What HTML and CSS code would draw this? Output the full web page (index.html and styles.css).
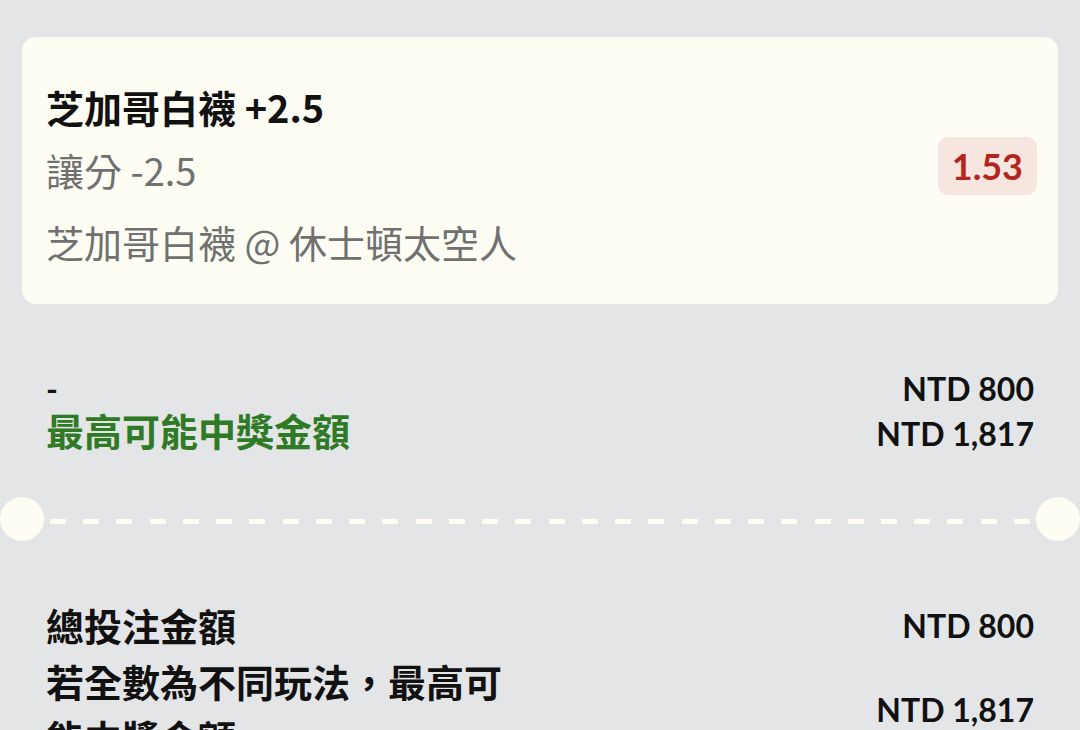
FILE: index.html
```html
<!DOCTYPE html>
<html lang="zh-Hant">
<head>
  <meta charset="UTF-8">
  <meta name="viewport" content="width=device-width, initial-scale=1.0">
  <title>投注單</title>
  <link rel="stylesheet" href="styles.css">
</head>
<body>
  <div class="slip">
    <div class="card">
      <div class="pick">
        <div class="pick-title">芝加哥白襪 +2.5</div>
        <div class="pick-market">讓分 -2.5</div>
        <div class="pick-match">芝加哥白襪 @ 休士頓太空人</div>
      </div>
      <div class="odds">1.53</div>
    </div>

    <div class="summary">
      <div class="row">
        <span class="dash">-</span>
        <span class="amount">NTD 800</span>
      </div>
      <div class="row">
        <span class="label win">最高可能中獎金額</span>
        <span class="amount">NTD 1,817</span>
      </div>
    </div>

    <div class="divider">
      <span class="notch"></span>
      <span class="dashes"></span>
      <span class="notch"></span>
    </div>

    <div class="totals">
      <div class="total-row">
        <span class="label">總投注金額</span>
        <span class="amount">NTD 800</span>
      </div>
      <div class="total-row">
        <span class="label wrap">若全數為不同玩法，最高可能中獎金額</span>
        <span class="amount">NTD 1,817</span>
      </div>
    </div>
  </div>
</body>
</html>
```

FILE: styles.css
```css
* {
  margin: 0;
  padding: 0;
  box-sizing: border-box;
}

body {
  background: #e4e5e7;
  color: #111111;
  font-family: Lato, "Noto Sans CJK TC", sans-serif;
  overflow: hidden;
}

.slip {
  padding-top: 37px;
}

.card {
  margin: 0 22px;
  background: #fdfdf4;
  border-radius: 14px;
  padding: 40px 21px 32px 24px;
  display: flex;
  align-items: center;
  justify-content: space-between;
}

.pick {
  font-family: "Noto Sans CJK TC", "Noto Sans", sans-serif;
  font-size: 38px;
}

.pick-title {
  font-weight: 700;
  line-height: 60px;
}

.pick-market,
.pick-match {
  color: #707070;
  line-height: 60px;
}

.pick-market {
  margin-top: 3px;
}

.pick-match {
  margin-top: 12px;
}

.odds {
  background: #f7e6df;
  color: #b3261e;
  font-size: 36px;
  font-weight: 700;
  border-radius: 10px;
  padding: 0 14px;
  line-height: 58px;
  margin-top: -17px;
}

.summary {
  padding: 63px 46px 0;
}

.row {
  display: flex;
  justify-content: space-between;
  align-items: baseline;
  line-height: 43px;
}

.dash,
.amount {
  font-size: 32px;
  font-weight: 700;
}

.label {
  font-size: 38px;
  font-weight: 700;
}

.win {
  color: #2f7a25;
}

.divider {
  display: flex;
  align-items: center;
  margin-top: 42px;
}

.notch {
  width: 44px;
  height: 44px;
  border-radius: 50%;
  background: #fdfdf4;
  flex-shrink: 0;
}

.dashes {
  flex: 1;
  height: 5px;
  margin: 4px 6px 0;
  background: repeating-linear-gradient(90deg, #fdfdf2 0 16px, transparent 16px 33.24px);
}

.totals {
  padding: 57px 46px 0;
}

.total-row {
  display: flex;
  justify-content: space-between;
  align-items: center;
  line-height: 56px;
}

.wrap {
  max-width: 480px;
}
```
